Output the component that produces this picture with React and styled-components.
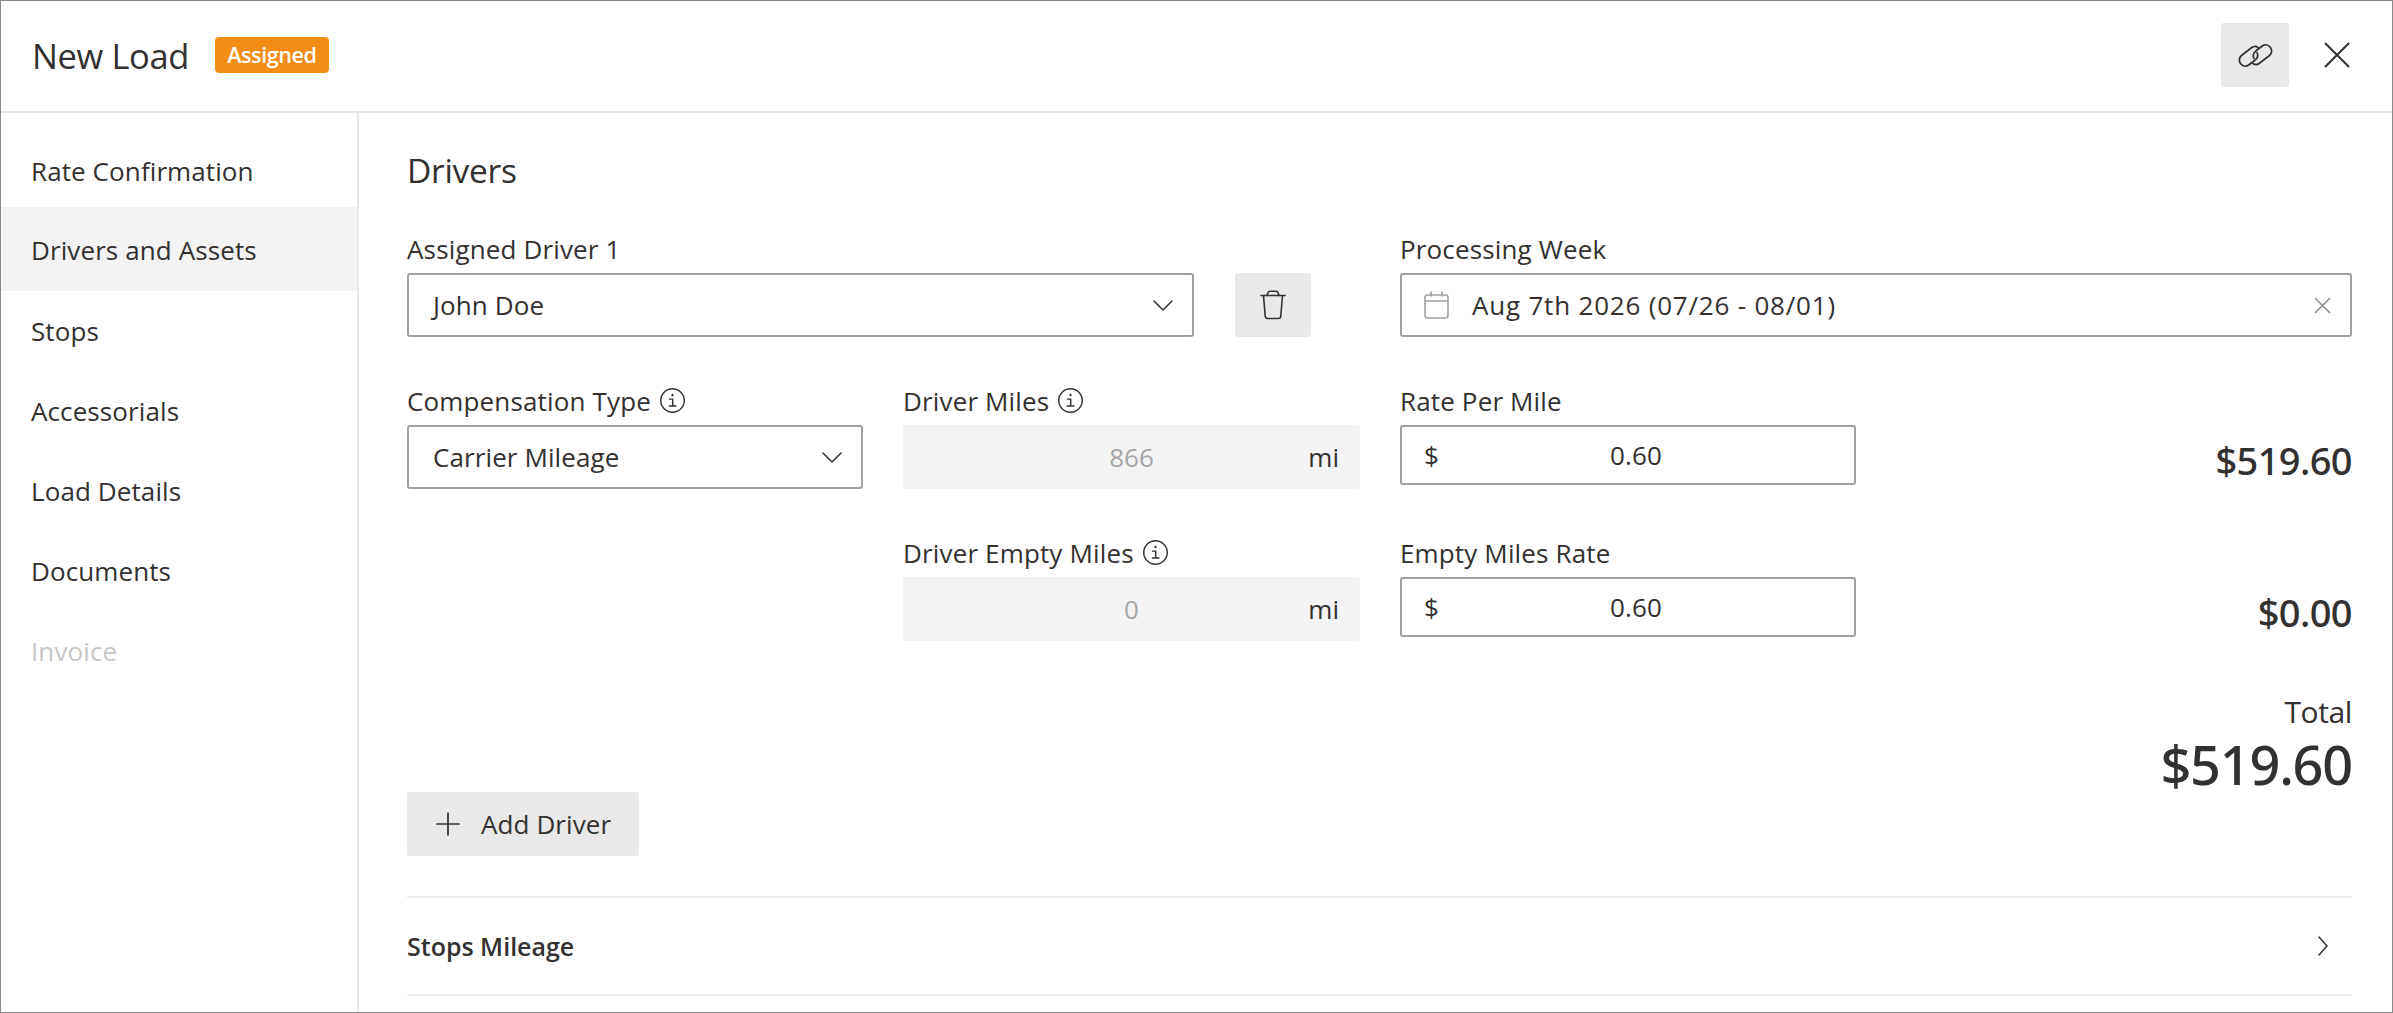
import React from "react";
import styled, { createGlobalStyle } from "styled-components";

const Global = createGlobalStyle`
  html, body { margin: 0; padding: 0; background: #fff; }
  * { box-sizing: border-box; }
  body { font-family: "Open Sans", "Noto Sans", sans-serif; color: #323130; }
`;

const Frame = styled.div`
  width: 2393px;
  height: 1013px;
  border: 1px solid #8a8a8a;
  display: flex;
  flex-direction: column;
  overflow: hidden;
  background: #fff;
`;
const Header = styled.header`
  height: 112px;
  flex: none;
  border-bottom: 2px solid #e9e9e9;
  display: flex;
  align-items: center;
  padding: 0 42px 2px 31px;
`;
const Title = styled.h1`
  margin: 0;
  font-size: 34.5px;
  font-weight: 400;
  letter-spacing: -0.4px;
`;
const Badge = styled.span`
  margin-left: 26px;
  margin-top: -1px;
  height: 36px;
  width: 114px;
  background: #f38d13;
  border-radius: 4px;
  color: #fff;
  font-size: 21.5px;
  font-weight: 600;
  letter-spacing: -0.4px;
  display: flex;
  align-items: center;
  justify-content: center;
`;
const HeaderActions = styled.div`
  margin-left: auto;
  display: flex;
  align-items: center;
  gap: 35px;
`;
const LinkButton = styled.div`
  width: 68px;
  height: 64px;
  background: #e9e9e9;
  border-radius: 3px;
  display: flex;
  align-items: center;
  justify-content: center;
`;
const Body = styled.div`
  flex: 1;
  display: flex;
  min-height: 0;
`;
const Sidebar = styled.nav`
  width: 358px;
  flex: none;
  border-right: 2px solid #e9e9e9;
  padding-top: 18px;
`;
const NavItem = styled.div`
  height: 80px;
  display: flex;
  align-items: center;
  padding-left: 30px;
  font-size: 26px;
  letter-spacing: 0.1px;
  color: ${(p) => (p.$disabled ? "#c8c6c4" : "#323130")};
  ${(p) => p.$active && "background:#f3f3f3; height:84px; margin-top:-4px; padding-top:2px;"}
`;
const Main = styled.main`
  flex: 1;
  min-width: 0;
  padding: 0 40px 0 48px;
  display: flex;
  flex-direction: column;
`;
const Heading = styled.h2`
  margin: 33px 0 0;
  height: 48px;
  line-height: 48px;
  font-size: 33.5px;
  font-weight: 400;
  letter-spacing: -0.3px;
`;
const TopRow = styled.div`
  margin-top: 41px;
  display: flex;
  align-items: flex-end;
`;
const Field = styled.div`
  display: flex;
  flex-direction: column;
  width: ${(p) => p.$w}px;
  flex: none;
`;
const Label = styled.label`
  height: 38px;
  font-size: 26px;
  letter-spacing: 0.15px;
  line-height: 28px;
  display: flex;
  align-items: flex-start;
  gap: 8px;
`;
const Box = styled.div`
  height: ${(p) => p.$h || 64}px;
  border: 2px solid #a0a0a0;
  border-radius: 3px;
  display: flex;
  align-items: center;
  font-size: 26px;
  letter-spacing: 0.1px;
  background: #fff;
  padding: 0 ${(p) => p.$pr ?? 19}px 0 ${(p) => p.$pl ?? 24}px;
`;
const Grow = styled.span`
  flex: 1;
`;
const TrashButton = styled.div`
  width: 76px;
  height: 64px;
  margin: 0 89px 0 41px;
  background: #e9e9e9;
  border-radius: 3px;
  flex: none;
  display: flex;
  align-items: center;
  justify-content: center;
`;
const DateText = styled.span`
  margin-left: 23px;
  flex: 1;
  letter-spacing: 0.8px;
`;
const FormGrid = styled.div`
  margin-top: 50px;
  display: grid;
  grid-template-columns: 456px 457px 456px 1fr;
  column-gap: 40px;
  grid-template-rows: 152px 152px;
`;
const Disabled = styled.div`
  height: 64px;
  background: #f3f3f3;
  border-radius: 3px;
  display: grid;
  grid-template-columns: 1fr auto 1fr;
  align-items: center;
  font-size: 26px;
  padding: 0 21px;
`;
const DisabledValue = styled.span`
  color: #a6a6a6;
  grid-column: 2;
`;
const Unit = styled.span`
  grid-column: 3;
  text-align: right;
`;
const Dollar = styled.span`
  width: 34px;
`;
const MoneyValue = styled.span`
  flex: 1;
  text-align: center;
  padding-right: 21px;
`;
const Amount = styled.div`
  align-self: end;
  justify-self: end;
  margin-bottom: ${(p) => p.$mb}px;
  font-family: "Noto Sans", "Open Sans", sans-serif;
  font-size: 38px;
  font-weight: 500;
  letter-spacing: -0.6px;
  line-height: 48px;
`;
const TotalBlock = styled.div`
  margin-top: 2px;
  height: 99px;
  display: flex;
  flex-direction: column;
  align-items: flex-end;
`;
const TotalLabel = styled.div`
  font-size: 30px;
  line-height: 38px;
  letter-spacing: -0.4px;
`;
const TotalValue = styled.div`
  font-family: "Noto Sans", "Open Sans", sans-serif;
  font-size: 54px;
  font-weight: 500;
  line-height: 66px;
  letter-spacing: -1.2px;
`;
const AddButton = styled.div`
  width: 232px;
  height: 64px;
  background: #e9e9e9;
  border-radius: 3px;
  display: flex;
  align-items: center;
  padding-left: 29px;
  gap: 21px;
  font-size: 26px;
  letter-spacing: 0.1px;
  flex: none;
`;
const Accordion = styled.div`
  margin-top: 40px;
  height: 100px;
  border-top: 2px solid #edeff3;
  border-bottom: 2px solid #edeff3;
  display: flex;
  align-items: center;
  justify-content: space-between;
  padding-right: 24px;
  font-size: 25px;
  font-weight: 600;
  flex: none;
`;
const Ico = styled.svg`
  flex: none;
  display: block;
  fill: none;
  stroke: ${(p) => p.$c || "#323130"};
  stroke-width: ${(p) => p.$sw || 1.6};
  stroke-linecap: round;
  stroke-linejoin: round;
`;

const Info = () => (
  <Ico width="27" height="27" viewBox="0 0 28 28" $sw={1.5}>
    <circle cx="14" cy="14" r="12.2" />
    <path d="M11 12.6h3.2v7M10.6 19.8h7" />
    <path d="M14 8v.6" strokeWidth="2.2" />
  </Ico>
);
const Chevron = () => (
  <Ico width="20" height="11" viewBox="0 0 20 11" $sw={1.5}>
    <path d="M1 1 10 10 19 1" />
  </Ico>
);

const nav = ["Rate Confirmation", "Drivers and Assets", "Stops", "Accessorials", "Load Details", "Documents", "Invoice"];

export default function App() {
  return (
    <Frame>
      <Global />
      <Header>
        <Title>New Load</Title>
        <Badge>Assigned</Badge>
        <HeaderActions>
          <LinkButton>
            <Ico width="35" height="25" viewBox="0 0 35 25" $sw={1.7}>
              <path d="M20 4.500C18 3 15.500 3.200 13.500 4.700L3.500 12.500C1 14.500.7 18 2.500 20.500c2 2.800 5.500 3.300 8.200 1.500l6.300-4.800c2.500-2 3.300-5 2-7.700" />
              <path d="M15 20.500c2 1.500 4.500 1.300 6.500-.2l10-7.800C34 10.500 34.300 7 32.500 4.500c-2-2.800-5.500-3.300-8.200-1.500L18 7.800c-2.500 2-3.300 5-2 7.700" />
            </Ico>
          </LinkButton>
          <Ico width="26" height="26" viewBox="0 0 26 26" $sw={2}>
            <path d="M1.500 1.500 24.500 24.500M24.500 1.500 1.500 24.500" />
          </Ico>
        </HeaderActions>
      </Header>
      <Body>
        <Sidebar>
          {nav.map((n) => (
            <NavItem key={n} $active={n === "Drivers and Assets"} $disabled={n === "Invoice"}>
              {n}
            </NavItem>
          ))}
        </Sidebar>
        <Main>
          <Heading>Drivers</Heading>
          <TopRow>
            <Field $w={787}>
              <Label>Assigned Driver 1</Label>
              <Box>
                <Grow>John Doe</Grow>
                <Chevron />
              </Box>
            </Field>
            <TrashButton>
              <Ico width="26" height="30" viewBox="0 0 26 30" $sw={1.6}>
                <path d="M1 5.500h24M3.500 5.500l1.700 20.500c.1 1.500 1 2.500 2.500 2.500h10.600c1.500 0 2.400-1 2.500-2.500l1.700-20.500" />
                <path d="M7 5.500 8 2.600C8.300 1.600 9 1.200 10 1.200h6c1 0 1.700.4 2 1.400l1 2.900" />
              </Ico>
            </TrashButton>
            <Field $w={952}>
              <Label>Processing Week</Label>
              <Box $pl={22} $pr={19}>
                <Ico width="25" height="28" viewBox="0 0 25 28" $c="#a0a0a0" $sw={1.6}>
                  <rect x="1" y="4" width="23" height="23" rx="2.500" />
                  <path d="M1 10h23M7 1v4M18 1v4" />
                </Ico>
                <DateText>Aug 7th 2026 (07/26 - 08/01)</DateText>
                <Ico width="17" height="17" viewBox="0 0 17 17" $c="#8a8a8a" $sw={1.5}>
                  <path d="M1.500 1.500 15.500 15.500M15.500 1.500 1.500 15.500" />
                </Ico>
              </Box>
            </Field>
          </TopRow>
          <FormGrid>
            <Field $w={456}>
              <Label>Compensation Type <Info /></Label>
              <Box>
                <Grow>Carrier Mileage</Grow>
                <Chevron />
              </Box>
            </Field>
            <Field $w={457}>
              <Label>Driver Miles <Info /></Label>
              <Disabled>
                <DisabledValue>866</DisabledValue>
                <Unit>mi</Unit>
              </Disabled>
            </Field>
            <Field $w={456}>
              <Label>Rate Per Mile</Label>
              <Box $h={60} $pl={22}>
                <Dollar>$</Dollar>
                <MoneyValue>0.60</MoneyValue>
              </Box>
            </Field>
            <Amount $mb={55}>$519.60</Amount>
            <span />
            <Field $w={457}>
              <Label>Driver Empty Miles <Info /></Label>
              <Disabled>
                <DisabledValue>0</DisabledValue>
                <Unit>mi</Unit>
              </Disabled>
            </Field>
            <Field $w={456}>
              <Label>Empty Miles Rate</Label>
              <Box $h={60} $pl={22}>
                <Dollar>$</Dollar>
                <MoneyValue>0.60</MoneyValue>
              </Box>
            </Field>
            <Amount $mb={55}>$0.00</Amount>
          </FormGrid>
          <TotalBlock>
            <TotalLabel>Total</TotalLabel>
            <TotalValue>$519.60</TotalValue>
          </TotalBlock>
          <AddButton>
            <Ico width="24" height="24" viewBox="0 0 24 24" $sw={1.7}>
              <path d="M12 1v22M1 12h22" />
            </Ico>
            Add Driver
          </AddButton>
          <Accordion>
            Stops Mileage
            <Ico width="10" height="20" viewBox="0 0 10 20" $sw={1.5}>
              <path d="M1 1 9 10 1 19" />
            </Ico>
          </Accordion>
        </Main>
      </Body>
    </Frame>
  );
}
